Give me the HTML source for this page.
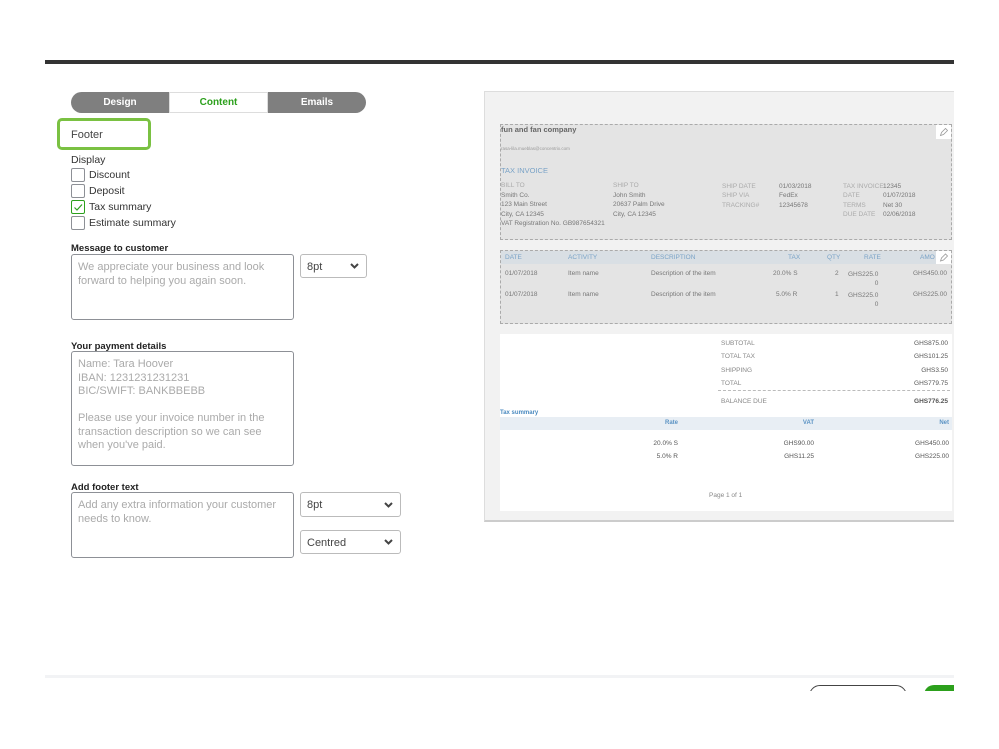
<!DOCTYPE html>
<html><head><meta charset="utf-8"><style>
*{box-sizing:border-box;margin:0;padding:0}
body{width:999px;height:749px;background:#fff;font-family:"Liberation Sans",sans-serif;position:relative;overflow:hidden;color:#393a3d}
.a{position:absolute;white-space:nowrap}
.lbl{font-size:10.5px;color:#333}
.cb{position:absolute;width:14px;height:14px;border:1px solid #8d9096;border-radius:2px;background:#fff}
.ta{position:absolute;border:1px solid #8d9096;border-radius:3px;padding:6px;font-size:11px;color:#aaa;line-height:13.5px;white-space:normal}
.sel{position:absolute;border:1px solid #bbb;border-radius:3px;font-size:11px;color:#444;padding:6px 6px}
.sel svg{position:absolute;right:7px;top:50%;margin-top:-3px}
.t{position:absolute;white-space:nowrap;font-size:6.5px;color:#777}
.g{color:#aaa}
.b{color:#7aa3c7}
</style></head><body>
<div class="a" style="left:45px;top:60px;width:909px;height:4px;background:#333"></div>
<div class="a" style="left:71px;top:92px;width:295px;height:21px;border-radius:11px;background:#7f7f7f;overflow:hidden">
 <div class="a" style="left:0;top:0;width:98px;height:21px;color:#fff;font-size:10px;font-weight:bold;text-align:center;line-height:21px">Design</div>
 <div class="a" style="left:98px;top:0;width:99px;height:21px;background:#fff;border:1px solid #ddd;color:#2ca01c;font-size:10px;font-weight:bold;text-align:center;line-height:19px">Content</div>
 <div class="a" style="left:197px;top:0;width:98px;height:21px;color:#fff;font-size:10px;font-weight:bold;text-align:center;line-height:21px">Emails</div>
</div>
<div class="a" style="left:57px;top:118px;width:94px;height:32px;border:3px solid #7ac142;border-radius:5px;font-size:11px;color:#444;padding:8px 11px">Footer</div>
<div class="a lbl" style="left:71px;top:154px">Display</div>
<div class="cb" style="left:71px;top:168px"></div><div class="a lbl" style="left:89px;top:169px">Discount</div>
<div class="cb" style="left:71px;top:184px"></div><div class="a lbl" style="left:89px;top:185px">Deposit</div>
<div class="cb" style="left:71px;top:200px;border-color:#2ca01c"><svg width="12" height="12" style="position:absolute;left:0;top:0"><path d="M2.5 6.5l2.5 2.5 5-5.5" stroke="#2ca01c" stroke-width="1.2" fill="none"/></svg></div><div class="a lbl" style="left:89px;top:201px">Tax summary</div>
<div class="cb" style="left:71px;top:216px"></div><div class="a lbl" style="left:89px;top:217px">Estimate summary</div>

<div class="a lbl" style="left:71px;top:243px;font-weight:bold;font-size:9.5px;color:#222">Message to customer</div>
<div class="ta" style="left:71px;top:254px;width:223px;height:66px">We appreciate your business and look forward to helping you again soon.</div>
<div class="sel" style="left:300px;top:254px;width:67px;height:24px">8pt<svg width="9" height="6"><path d="M1 1l3.5 3.5L8 1" stroke="#444" stroke-width="2" fill="none"/></svg></div>

<div class="a lbl" style="left:71px;top:341px;font-weight:bold;font-size:9.5px;color:#222">Your payment details</div>
<div class="ta" style="left:71px;top:351px;width:223px;height:115px">Name: Tara Hoover<br>IBAN: 1231231231231<br>BIC/SWIFT: BANKBBEBB<br><br>Please use your invoice number in the transaction description so we can see when you've paid.</div>

<div class="a lbl" style="left:71px;top:482px;font-weight:bold;font-size:9.5px;color:#222">Add footer text</div>
<div class="ta" style="left:71px;top:492px;width:223px;height:66px">Add any extra information your customer needs to know.</div>
<div class="sel" style="left:300px;top:492px;width:101px;height:25px">8pt<svg width="9" height="6"><path d="M1 1l3.5 3.5L8 1" stroke="#444" stroke-width="2" fill="none"/></svg></div>
<div class="sel" style="left:300px;top:530px;width:101px;height:24px">Centred<svg width="9" height="6"><path d="M1 1l3.5 3.5L8 1" stroke="#444" stroke-width="2" fill="none"/></svg></div>

<div class="a" style="left:484px;top:91px;width:470px;height:431px;background:#f2f2f2;border-top:1px solid #ddd;border-left:1px solid #ddd;border-bottom:2px solid #ccc"></div>
<div class="a" style="left:500px;top:124px;width:452px;height:116px;background:#e4e4e4;border:1px dashed #aaa"></div>
<div class="a" style="left:936px;top:125px;width:15px;height:14px;background:#fff"><svg width="15" height="14"><path d="M4.5 10.5l1-3 4-4 2 2-4 4z" stroke="#999" stroke-width="0.8" fill="none"/></svg></div>
<div class="t" style="left:501px;top:125px;font-size:7.5px;font-weight:bold;color:#666">fun and fan company</div>
<div class="t" style="left:501px;top:146px;font-size:4.5px;color:#999">rasa-lila.mueblas@concentrix.com</div>
<div class="t b" style="left:501px;top:166px;font-size:7.5px">TAX INVOICE</div>
<div class="t g" style="left:501px;top:182px">BILL TO</div>
<div class="t" style="left:501px;top:191px;line-height:9.3px">Smith Co.<br>123 Main Street<br>City, CA 12345<br>VAT Registration No. GB987654321</div>
<div class="t g" style="left:613px;top:182px">SHIP TO</div>
<div class="t" style="left:613px;top:191px;line-height:9.3px">John Smith<br>20637 Palm Drive<br>City, CA 12345</div>
<div class="t g" style="left:722px;top:182px;line-height:9.3px">SHIP DATE<br>SHIP VIA<br>TRACKING#</div>
<div class="t" style="left:779px;top:182px;line-height:9.3px">01/03/2018<br>FedEx<br>12345678</div>
<div class="t g" style="left:843px;top:182px;line-height:9.3px">TAX INVOICE<br>DATE<br>TERMS<br>DUE DATE</div>
<div class="t" style="left:883px;top:182px;line-height:9.3px">12345<br>01/07/2018<br>Net 30<br>02/06/2018</div>

<div class="a" style="left:500px;top:250px;width:452px;height:74px;background:#e4e4e4;border:1px dashed #aaa"></div>
<div class="a" style="left:501px;top:251px;width:450px;height:13px;background:#d9dfe4"></div>
<div class="a" style="left:936px;top:251px;width:15px;height:13px;background:#fff"><svg width="15" height="13"><path d="M4.5 10l1-3 4-4 2 2-4 4z" stroke="#999" stroke-width="0.8" fill="none"/></svg></div>
<div class="t b" style="left:505px;top:254px">DATE</div>
<div class="t b" style="left:568px;top:254px">ACTIVITY</div>
<div class="t b" style="left:651px;top:254px">DESCRIPTION</div>
<div class="t b" style="left:788px;top:254px">TAX</div>
<div class="t b" style="left:827px;top:254px">QTY</div>
<div class="t b" style="left:864px;top:254px">RATE</div>
<div class="t b" style="left:920px;top:254px">AMO</div>
<div class="t" style="left:505px;top:270px">01/07/2018</div><div class="t" style="left:568px;top:270px">Item name</div><div class="t" style="left:651px;top:270px">Description of the item</div><div class="t" style="left:773px;top:270px">20.0% S</div><div class="t" style="left:835px;top:270px">2</div><div class="t" style="left:848px;top:270px;line-height:9px;text-align:right">GHS225.0<br>0</div><div class="t" style="left:913px;top:270px">GHS450.00</div>
<div class="t" style="left:505px;top:291px">01/07/2018</div><div class="t" style="left:568px;top:291px">Item name</div><div class="t" style="left:651px;top:291px">Description of the item</div><div class="t" style="left:776px;top:291px">5.0% R</div><div class="t" style="left:835px;top:291px">1</div><div class="t" style="left:848px;top:291px;line-height:9px;text-align:right">GHS225.0<br>0</div><div class="t" style="left:913px;top:291px">GHS225.00</div>

<div class="a" style="left:500px;top:334px;width:452px;height:177px;background:#fff"></div>
<div class="t g" style="left:721px;top:337px;line-height:13.4px;color:#888">SUBTOTAL<br>TOTAL TAX<br>SHIPPING<br>TOTAL</div>
<div class="t" style="left:880px;top:337px;width:68px;text-align:right;line-height:13.4px;color:#555">GHS875.00<br>GHS101.25<br>GHS3.50<br>GHS779.75</div>
<div class="a" style="left:718px;top:390px;width:232px;border-top:1px dashed #bbb"></div>
<div class="t" style="left:721px;top:398px;color:#888">BALANCE DUE</div>
<div class="t" style="left:880px;top:398px;width:68px;text-align:right;font-weight:bold;color:#555">GHS776.25</div>
<div class="t" style="left:500px;top:410px;font-size:6px;font-weight:bold;color:#4a8ac0">Tax summary</div>
<div class="a" style="left:500px;top:417px;width:452px;height:13px;background:#e8eef4"></div>
<div class="t" style="left:640px;top:420px;width:38px;text-align:right;font-weight:bold;color:#5b93c4;font-size:6px">Rate</div>
<div class="t" style="left:760px;top:420px;width:54px;text-align:right;font-weight:bold;color:#5b93c4;font-size:6px">VAT</div>
<div class="t" style="left:900px;top:420px;width:49px;text-align:right;font-weight:bold;color:#5b93c4;font-size:6px">Net</div>
<div class="t" style="left:630px;top:437px;width:48px;text-align:right;line-height:13.4px;color:#555">20.0% S<br>5.0% R</div>
<div class="t" style="left:760px;top:437px;width:54px;text-align:right;line-height:13.4px;color:#555">GHS90.00<br>GHS11.25</div>
<div class="t" style="left:890px;top:437px;width:59px;text-align:right;line-height:13.4px;color:#555">GHS450.00<br>GHS225.00</div>
<div class="t" style="left:709px;top:492px;color:#888">Page 1 of 1</div>

<div class="a" style="left:45px;top:675px;width:909px;height:3px;background:#f2f3f5"></div>
<div class="a" style="left:800px;top:684px;width:160px;height:7px;overflow:hidden">
 <div class="a" style="left:9px;top:1px;width:98px;height:22px;border:1.5px solid #444;border-radius:12px"></div>
 <div class="a" style="left:124px;top:1px;width:30px;height:22px;background:#2ca01c;border-radius:10px 0 0 0"></div>
</div>
</body></html>
